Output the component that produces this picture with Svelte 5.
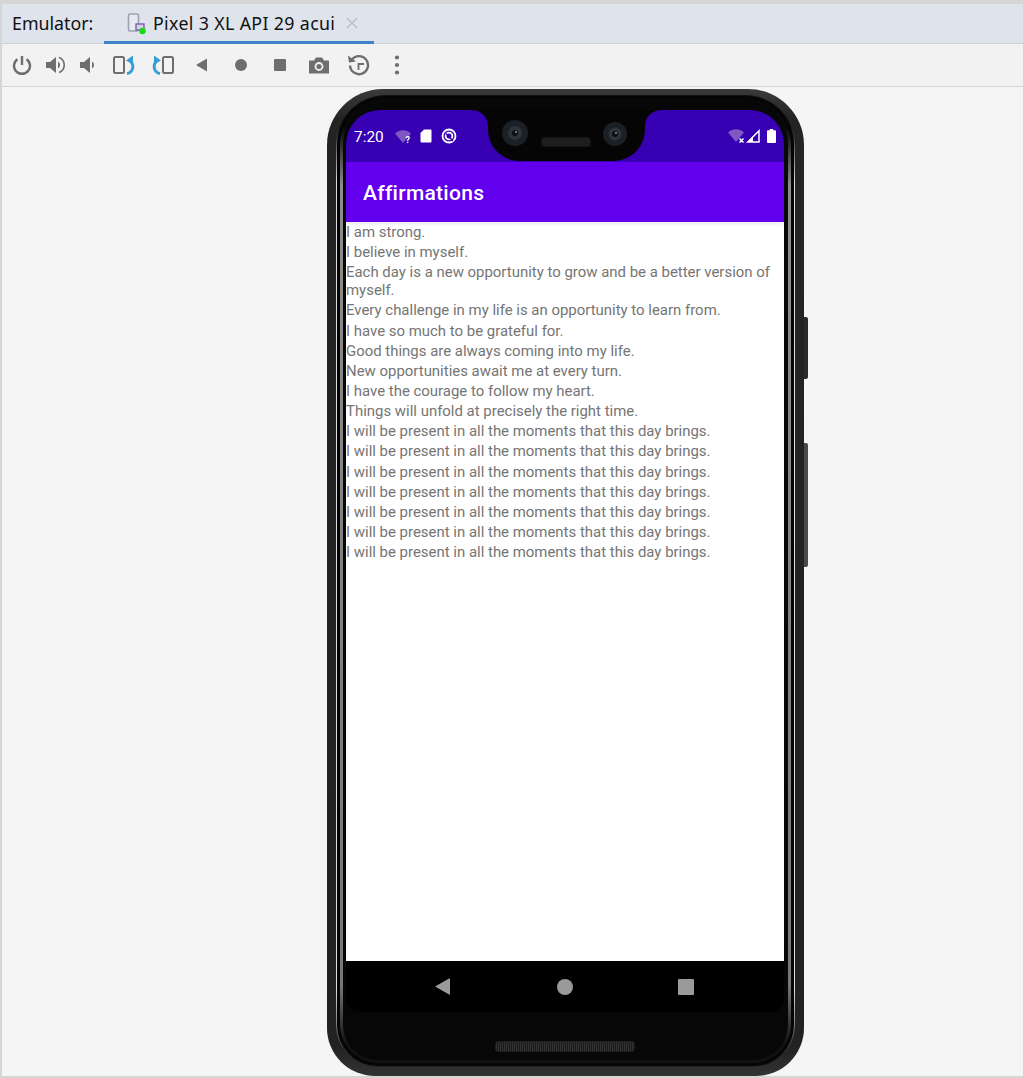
<script>
  const lines = [
    'I am strong.',
    'I believe in myself.',
    'Each day is a new opportunity to grow and be a better version of myself.',
    'Every challenge in my life is an opportunity to learn from.',
    'I have so much to be grateful for.',
    'Good things are always coming into my life.',
    'New opportunities await me at every turn.',
    'I have the courage to follow my heart.',
    'Things will unfold at precisely the right time.',
    ...Array(7).fill('I will be present in all the moments that this day brings.')
  ];
</script>

<div class="window">
  <header class="titlebar">
    <span class="label">Emulator:</span>
    <div class="tab">
      <svg class="tabicon" width="20" height="22" viewBox="0 0 20 22">
        <rect x="1.5" y="1" width="10" height="17" rx="1.5" fill="#e6e9f0" stroke="#9aa3ad" stroke-width="1.6"/>
        <rect x="9" y="11" width="8" height="6" fill="#d8d0e8" stroke="#7d61a8" stroke-width="1.4"/>
        <circle cx="15.5" cy="18" r="3.2" fill="#16d916"/>
      </svg>
      <span class="tabtext">Pixel 3 XL API 29 acui</span>
      <svg class="close" width="12" height="12" viewBox="0 0 12 12"><path d="M1 1l10 10M11 1L1 11" stroke="#b9bdc4" stroke-width="1.4"/></svg>
    </div>
  </header>

  <nav class="toolbar">
    <svg width="22" height="22" viewBox="0 0 22 22"><path d="M11 2v9" stroke="#6e6e6e" stroke-width="2.4" fill="none"/><path d="M6.5 5.2a8 8 0 1 0 9 0" stroke="#6e6e6e" stroke-width="2.4" fill="none"/></svg>
    <svg width="22" height="22" viewBox="0 0 22 22"><path d="M1 8h4l6-5v16l-6-5H1z" fill="#6e6e6e"/><path d="M13 7.500a4 4 0 0 1 0 7z" fill="#6e6e6e"/><path d="M14 3.500a8 8 0 0 1 0 15" stroke="#6e6e6e" stroke-width="1.600" fill="none"/></svg>
    <svg width="22" height="22" viewBox="0 0 22 22"><path d="M3 8h4l6-5v16l-6-5H3z" fill="#6e6e6e"/><path d="M15 7.500a4 4 0 0 1 0 7z" fill="#6e6e6e"/></svg>
    <svg width="26" height="22" viewBox="0 0 26 22"><rect x="3" y="3" width="10" height="16" rx="1.500" fill="none" stroke="#6e6e6e" stroke-width="2"/><path d="M16 19.500c6-1 8-8 3-13" fill="none" stroke="#389fd6" stroke-width="3"/><path d="M15 6.500l7-5v9z" fill="#389fd6"/></svg>
    <svg width="26" height="22" viewBox="0 0 26 22"><rect x="13" y="3" width="10" height="16" rx="1.500" fill="none" stroke="#6e6e6e" stroke-width="2"/><path d="M10 19.500c-6-1-8-8-3-13" fill="none" stroke="#389fd6" stroke-width="3"/><path d="M11 6.500l-7-5v9z" fill="#389fd6"/></svg>
    <svg width="22" height="22" viewBox="0 0 22 22"><path d="M5 11l11-6.500v13z" fill="#6e6e6e"/></svg>
    <svg width="22" height="22" viewBox="0 0 22 22"><circle cx="11" cy="11" r="6" fill="#6e6e6e"/></svg>
    <svg width="22" height="22" viewBox="0 0 22 22"><rect x="5" y="5" width="12" height="12" rx="1" fill="#6e6e6e"/></svg>
    <svg width="22" height="22" viewBox="0 0 22 22"><path d="M1 6.500h5L8 3.500h6l2 3h5v13H1z" fill="#6e6e6e"/><circle cx="11" cy="12.500" r="4.400" fill="#f2f2f2"/><circle cx="11" cy="12.500" r="2.600" fill="#6e6e6e"/></svg>
    <svg width="24" height="22" viewBox="0 0 24 22"><path d="M5.600 6a9 9 0 1 1-1.600 5.500" fill="none" stroke="#6e6e6e" stroke-width="2.400"/><path d="M2 1.500l1 7 7-1z" fill="#6e6e6e"/><path d="M18 10h-5.500v6" stroke="#6e6e6e" stroke-width="1.800" fill="none"/></svg>
    <svg width="22" height="22" viewBox="0 0 22 22"><circle cx="11" cy="3.500" r="2.100" fill="#6e6e6e"/><circle cx="11" cy="11" r="2.100" fill="#6e6e6e"/><circle cx="11" cy="18.500" r="2.100" fill="#6e6e6e"/></svg>
  </nav>

  <main class="stage">
    <div class="phone">
      <span class="btn power"></span>
      <span class="btn volume"></span>
      <div class="rim-light">
        <div class="rim-dark">
          <div class="rim-grey">
            <div class="face">
              <div class="screen">
                <div class="statusbar">
                  <div class="st-left">
                    <span class="time">7:20</span>
                    <svg class="s-wifi" width="17" height="14" viewBox="0 0 17 14"><path d="M0 3.500C4.500-.7 11.500-.7 16 3.500L8 13z" fill="#7e57c2"/><text x="10.500" y="13" class="q">?</text></svg>
                    <svg class="s-sd" width="12" height="14" viewBox="0 0 12 14"><path d="M4 .5h6.500a1 1 0 0 1 1 1v11a1 1 0 0 1-1 1h-9a1 1 0 0 1-1-1V4z" fill="#fff"/></svg>
                    <svg class="s-dnd" width="16" height="16" viewBox="0 0 16 16"><circle cx="8" cy="8" r="6.500" fill="none" stroke="#fff" stroke-width="1.800"/><circle cx="8" cy="8" r="3.400" fill="none" stroke="#fff" stroke-width="1.800"/><path d="M5 5.500l7 7.500" stroke="#3700b3" stroke-width="1.400"/></svg>
                  </div>
                  <div class="st-right">
                    <svg class="s-wifi2" width="18" height="14" viewBox="0 0 18 14"><path d="M0 3.500C4.500-.7 11.500-.7 16 3.500L8 13z" fill="#7e57c2"/><path d="M11.500 9.500l4 4M15.500 9.500l-4 4" stroke="#fff" stroke-width="1.500"/></svg>
                    <svg class="s-sig" width="14" height="14" viewBox="0 0 14 14"><path d="M13 1.800V13H1.800z" fill="none" stroke="#fff" stroke-width="1.500"/><path d="M7 7.500V13H1.500z" fill="#fff"/></svg>
                    <svg class="s-bat" width="9" height="14" viewBox="0 0 9 14"><path d="M2.800 0h3.400v1.300H8a1 1 0 0 1 1 1V13a1 1 0 0 1-1 1H1a1 1 0 0 1-1-1V2.300a1 1 0 0 1 1-1h1.800z" fill="#fff"/></svg>
                  </div>
                  <svg class="notch" width="214" height="51" viewBox="0 0 214 51">
                    <path d="M10 0C21 0 28 6 28 17v2c0 18 14 32 32 32h93c18 0 32-14 32-32v-2c0-11 7-17 18-17z" fill="#050505"/>
                    <circle cx="55" cy="23" r="13" fill="#1a2026"/>
                    <circle cx="55" cy="23" r="7" fill="#2c343b"/>
                    <circle cx="55" cy="23" r="3" fill="#0b0f12"/>
                    <circle cx="56" cy="22" r="1" fill="#8a9299"/>
                    <circle cx="155" cy="24" r="12" fill="#1a2026"/>
                    <circle cx="155" cy="24" r="6.500" fill="#2c343b"/>
                    <circle cx="155" cy="24" r="3" fill="#0b0f12"/>
                    <circle cx="156" cy="23" r="1" fill="#8a9299"/>
                    <rect x="81.500" y="27.500" width="49" height="9" rx="3" fill="#1e1e1e" stroke="#151515"/>
                  </svg>
                </div>
                <div class="appbar">Affirmations</div>
                <div class="content">
                  {#each lines as line}
                    <p>{line}</p>
                  {/each}
                </div>
                <div class="navbar">
                  <svg width="16" height="18" viewBox="0 0 16 18"><path d="M0 8.500L15 0v17z" fill="#9a9a9a"/></svg>
                  <svg width="16" height="16" viewBox="0 0 16 16"><circle cx="8" cy="8" r="8" fill="#9a9a9a"/></svg>
                  <svg width="16" height="16" viewBox="0 0 16 16"><rect width="16" height="16" rx="1" fill="#9a9a9a"/></svg>
                </div>
              </div>
              <div class="chin"><span class="speaker"></span></div>
            </div>
          </div>
        </div>
      </div>
    </div>
  </main>
</div>

<style>
  :global(body) { margin: 0; }
  .window {
    width: 1023px; height: 1078px; box-sizing: border-box;
    padding: 4px 0 2px 2px; background: #d6d6d6;
    display: flex; flex-direction: column; overflow: hidden;
  }
  .titlebar {
    height: 40px; flex: none; box-sizing: border-box;
    background: #dfe3ec; border-bottom: 1px solid #cfcfcf;
    display: flex; align-items: stretch;
    font-family: "Noto Sans", "Open Sans", sans-serif; font-size: 17.8px; color: #111;
  }
  .label { margin-left: 10px; width: 92px; align-self: center; margin-top: -1px; }
  .tab {
    width: 270px; box-sizing: border-box; border-bottom: 3px solid #4083c9;
    display: flex; align-items: center; padding-left: 23px; margin-bottom: -1px;
  }
  .tabicon { margin-right: 6px; margin-top: 2px; }
  .tabtext { width: 193px; white-space: nowrap; letter-spacing: 0.35px; }
  .toolbar {
    height: 43px; flex: none; box-sizing: border-box;
    background: #f2f2f2; border-bottom: 1px solid #d4d4d4;
    display: flex; align-items: center; padding-left: 9px;
  }
  .toolbar svg { margin-right: 11px; flex: none; }
  .toolbar svg:nth-child(1) { margin-right: 12px; }
  .toolbar svg:nth-child(2) { margin-right: 10px; }
  .toolbar svg:nth-child(3) { margin-right: 12px; }
  .toolbar svg:nth-child(4) { margin-right: 13px; }
  .toolbar svg:nth-child(5) { margin-right: 15px; }
  .toolbar svg:nth-child(6), .toolbar svg:nth-child(7), .toolbar svg:nth-child(8) { margin-right: 17px; }
  .toolbar svg:nth-child(9) { margin-right: 16px; }
  .toolbar svg:nth-child(10) { margin-right: 16px; }
  .stage {
    flex: 1; background: #f5f5f5; padding: 2px 0 0 325px; min-height: 0;
  }
  .phone {
    position: relative; width: 477px; height: 987px; box-sizing: border-box;
    background: linear-gradient(#3a3a3a, #242424 3%, #222 97%, #333);
    border-radius: 56px 56px 48px 48px; padding: 6px 9px 9px;
  }
  .btn { position: absolute; right: -4px; width: 4px; background: #2b2b2b; border-radius: 0 2px 2px 0; }
  .power { top: 228px; height: 62px; }
  .volume { top: 354px; height: 124px; background: #4a4a4a; }
  .rim-light {
    height: 100%; box-sizing: border-box; padding: 1px;
    border-radius: 50px 50px 42px 42px;
    background: linear-gradient(#111 3%, #ddd 9%, #ddd 92%, #222 99%);
  }
  .rim-dark {
    height: 100%; box-sizing: border-box; padding: 3px;
    background: #050505; border-radius: 49px 49px 41px 41px;
  }
  .rim-grey {
    height: 100%; box-sizing: border-box; padding: 3px;
    border-radius: 46px 46px 38px 38px;
    background: linear-gradient(#080808 3%, #8d8d8d 9%, #777 92%, #111 98%);
  }
  .face {
    height: 100%; box-sizing: border-box; background: #070707;
    border-radius: 43px 43px 35px 35px;
    padding: 8px 4px 0 3px; display: flex; flex-direction: column;
  }
  .screen {
    height: 902px; flex: none; overflow: hidden; background: #000;
    border-radius: 34px 34px 14px 14px; display: flex; flex-direction: column;
  }
  .statusbar {
    position: relative; height: 52px; flex: none; background: #3700b3;
    display: flex; justify-content: space-between; align-items: center;
    padding: 0 8px 0 8px; font-family: Roboto, sans-serif; color: #fff;
  }
  .notch { position: absolute; left: 114px; top: 0; }
  .st-left, .st-right { display: flex; align-items: center; }
  .time { font-size: 15.4px; width: 41px; margin-top: 1px; }
  .s-wifi { margin-right: 8px; margin-top: 1px; }
  .s-sd { margin-right: 9px; }
  .s-wifi2 { margin-right: 0; }
  .s-sig { margin-right: 7px; }
  .q { font: 700 9px Roboto, sans-serif; fill: #fff; }
  .appbar {
    height: 60px; flex: none; background: #6200ee; color: #fff;
    font: 500 21px/62px Roboto, sans-serif; padding-left: 17px; letter-spacing: 0.28px;
    box-shadow: 0 2px 4px rgba(0,0,0,.08); position: relative;
  }
  .content {
    height: 739px; flex: none; box-sizing: border-box; background: #fff; padding-top: 2px;
    font-family: Roboto, sans-serif; font-size: 14.94px; line-height: 17.9px; color: #757575;
  }
  .content p { margin: 0; padding-bottom: 2.25px; }
  .navbar {
    flex: 1; display: flex; align-items: center; padding: 0 90px 0 89px;
    justify-content: space-between; background: #000;
  }
  .chin { flex: 1; display: flex; justify-content: center; padding-top: 29px; }
  .speaker {
    width: 138px; height: 9px; border-radius: 3px; background:
      repeating-linear-gradient(90deg, #333 0 1px, #1a1a1a 1px 2px);
    border: 1px solid #1d1d1d;
  }
</style>
